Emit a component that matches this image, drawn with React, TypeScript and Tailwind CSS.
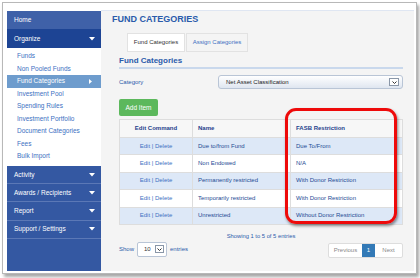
import React from "react";

const subItems = [
  "Funds",
  "Non Pooled Funds",
  "Fund Categories",
  "Investment Pool",
  "Spending Rules",
  "Investment Portfolio",
  "Document Categories",
  "Fees",
  "Bulk Import",
];

const lowerItems = ["Activity", "Awards / Recipients", "Report", "Support / Settings"];

const rows = [
  { name: "Due to/from Fund", fasb: "Due To/From" },
  { name: "Non Endowed", fasb: "N/A" },
  { name: "Permanently restricted", fasb: "With Donor Restriction" },
  { name: "Temporarily restricted", fasb: "With Donor Restriction" },
  { name: "Unrestricted", fasb: "Without Donor Restriction" },
];

function Caret() {
  return (
    <svg width="6" height="4" viewBox="0 0 6 4" className="ml-auto mr-[6px]">
      <path d="M0 0 H6 L3 3.5 Z" fill="#fff" />
    </svg>
  );
}

function Sidebar() {
  return (
    <div className="w-[94px] mt-[1px] flex flex-col bg-[#3458a2] text-[6.5px]">
      <div className="h-[18px] flex items-center pl-[7px] bg-[#3f61a8] text-white">Home</div>
      <div className="h-[19px] flex items-center pl-[7px] bg-[#1d4494] text-white">
        Organize
        <Caret />
      </div>
      <div className="bg-white pt-[2px] pb-[3.5px]">
        {subItems.map((s) =>
          s === "Fund Categories" ? (
            <div key={s} className="h-[12.5px] flex items-center pl-[10px] bg-[#6e9ccd] text-white">
              {s}
              <svg width="3" height="5" viewBox="0 0 3 5" className="ml-auto mr-[9px]">
                <path d="M0 0 L3 2.5 L0 5 Z" fill="#fff" />
              </svg>
            </div>
          ) : (
            <div key={s} className="h-[12.5px] flex items-center pl-[10px] text-[#3d70c2]">
              {s}
            </div>
          )
        )}
      </div>
      {lowerItems.map((s) => (
        <div key={s} className="h-[18.2px] flex items-center pl-[7px] text-white border-b border-[#5b78b6]">
          {s}
          <Caret />
        </div>
      ))}
      <div className="flex-1" />
    </div>
  );
}

export default function App() {
  return (
    <div className="w-[420px] h-[278px] bg-white" style={{ fontFamily: '"Liberation Sans", Arial, sans-serif' }}>
      <div className="ml-[2px] mt-[2px] w-[415px] h-[272px] border border-[#b8b8b8] bg-white shadow-[2px_3px_3px_rgba(0,0,0,0.35)] flex pt-[7px] pl-[4px] pr-[2px] pb-[2px]">
        <Sidebar />
        <div className="flex-1 bg-[#f4f4f4] border-t border-[#dfe6f2] flex flex-col">
          <div className="mt-[2px] ml-[11px] h-[13px] leading-[13px] text-[9px] font-bold text-[#2a5bab]">FUND CATEGORIES</div>
          <div className="pl-[18px] pr-[11px] flex flex-col">
            <div className="mt-[7px] ml-[8px] flex h-[19px] text-[6px]">
              <div className="w-[58px] bg-white border border-[#e2e2e2] flex items-center justify-center text-[#333]">Fund Categories</div>
              <div className="w-[62px] ml-[1px] border border-[#e2e2e2] flex items-center justify-center text-[#3d70c2]">Assign Categories</div>
            </div>
            <div className="mt-[2px] h-[15px] flex items-center text-[8px] font-bold text-[#2a5bab] border-b-2 border-[#c9d8ec]">Fund Categories</div>
            <div className="mt-[6px] flex items-center h-[14px]">
              <div className="w-[99px] text-[6px] text-[#2a5bab]">Category</div>
              <div className="flex-1 h-[14px] rounded-[3px] border border-[#b9c5d6] bg-gradient-to-b from-white to-[#dfe6f0] flex items-center pl-[7px] text-[6px] text-[#222]">
                Net Asset Classification
                <div className="ml-auto mr-[3px] w-[10px] h-[8px] border border-[#8a97a8] bg-white flex items-center justify-center">
                  <svg width="5" height="3" viewBox="0 0 5 3">
                    <path d="M0.5 0.5 L2.5 2.5 L4.5 0.5" stroke="#333" strokeWidth="1" fill="none" />
                  </svg>
                </div>
              </div>
            </div>
            <div className="mt-[10px] w-[39px] h-[17px] rounded-[2px] bg-[#5cb85c] text-white text-[6.5px] flex items-center justify-center">Add Item</div>
            <div className="relative mt-[3px]">
              <div className="border border-[#dddddd] text-[6px]">
                <div className="flex h-[17px] bg-[#f7f7f7] font-bold text-[#1f3f8c]">
                  <div className="w-[73px] border-r border-[#dddddd] flex items-center justify-center">Edit Command</div>
                  <div className="w-[98px] border-r border-[#dddddd] flex items-center pl-[5px]">Name</div>
                  <div className="flex-1 flex items-center pl-[5px]">FASB Restriction</div>
                </div>
                {rows.map((r, i) => (
                  <div key={i} className={`flex h-[17.4px] border-t border-[#dddddd] ${i % 2 === 0 ? "bg-[#dde8f7]" : "bg-white"}`}>
                    <div className="w-[73px] border-r border-[#dddddd] flex items-center justify-center text-[#3d70c2]">Edit | Delete</div>
                    <div className="w-[98px] border-r border-[#dddddd] flex items-center pl-[5px] text-[#234a94]">{r.name}</div>
                    <div className="flex-1 flex items-center pl-[5px] text-[#234a94]">{r.fasb}</div>
                  </div>
                ))}
              </div>
              <div className="absolute left-[166px] top-[-11px] w-[112px] h-[116px] rounded-[11px] border-[3.5px] border-[#ee0a0a] shadow-[1px_2px_3px_rgba(0,0,0,0.45)]" />
            </div>
            <div className="mt-[7px] text-center text-[5.8px] text-[#2a5bab]">Showing 1 to 5 of 5 entries</div>
            <div className="mt-[2px] flex items-start">
              <div className="flex items-center h-[15px] text-[6px] text-[#2a5bab] mt-[-1px]">
                Show
                <div className="mx-[3px] w-[30px] h-[15px] rounded-[2px] border border-[#b9c5d6] bg-white flex items-center pl-[6px] text-[#333]">
                  10
                  <div className="ml-auto mr-[2px] w-[9px] h-[8px] border border-[#8a97a8] flex items-center justify-center">
                    <svg width="5" height="3" viewBox="0 0 5 3">
                      <path d="M0.5 0.5 L2.5 2.5 L4.5 0.5" stroke="#333" strokeWidth="1" fill="none" />
                    </svg>
                  </div>
                </div>
                entries
              </div>
              <div className="ml-auto flex h-[15px] text-[6px] border border-[#dddddd] rounded-[2px] bg-white">
                <div className="w-[33px] flex items-center justify-center text-[#888]">Previous</div>
                <div className="w-[13px] flex items-center justify-center bg-[#337ab7] text-white">1</div>
                <div className="w-[27px] flex items-center justify-center text-[#888]">Next</div>
              </div>
            </div>
          </div>
        </div>
      </div>
    </div>
  );
}
